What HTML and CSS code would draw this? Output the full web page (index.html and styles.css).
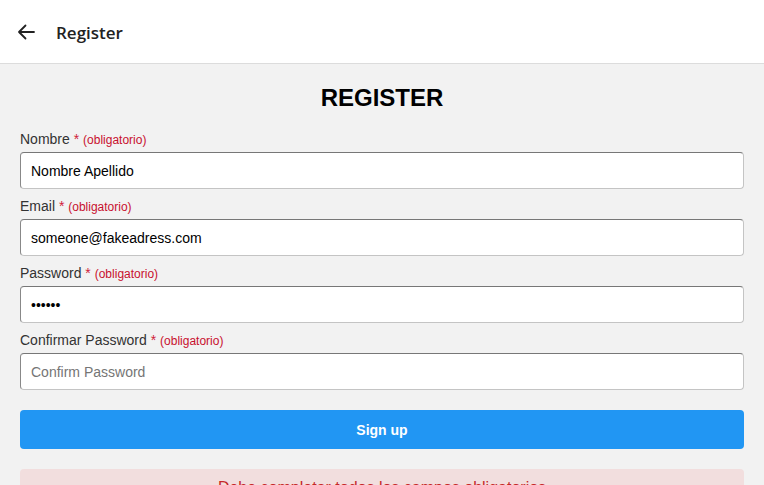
FILE: index.html
```html
<!DOCTYPE html>
<html>
<head>
<meta charset="utf-8">
<link rel="stylesheet" href="styles.css">
</head>
<body>
<header class="topbar">
  <button class="back" aria-label="Back">
    <svg width="20" height="20" viewBox="0 0 20 20"><path d="M18 10H3M9.5 3.5L3 10l6.5 6.5" fill="none" stroke="#222" stroke-width="1.8" stroke-linecap="round" stroke-linejoin="round"/></svg>
  </button>
  <span class="topbar-title">Register</span>
</header>
<main class="content">
  <h1 class="title">REGISTER</h1>
  <form class="form">
    <div class="field">
      <label class="label">Nombre <span class="req">*</span> <span class="req-note">(obligatorio)</span></label>
      <input class="input" type="text" value="Nombre Apellido">
    </div>
    <div class="field">
      <label class="label">Email <span class="req">*</span> <span class="req-note">(obligatorio)</span></label>
      <input class="input" type="text" value="someone@fakeadress.com">
    </div>
    <div class="field">
      <label class="label">Password <span class="req">*</span> <span class="req-note">(obligatorio)</span></label>
      <input class="input" type="password" value="123456">
    </div>
    <div class="field">
      <label class="label">Confirmar Password <span class="req">*</span> <span class="req-note">(obligatorio)</span></label>
      <input class="input" type="password" placeholder="Confirm Password">
    </div>
    <button class="submit" type="button">Sign up</button>
    <div class="alert">Debe completar todos los campos obligatorios</div>
  </form>
</main>
</body>
</html>
```
FILE: styles.css
```css
* { box-sizing: border-box; }
html, body { margin: 0; padding: 0; }
body {
  background: #f2f2f2;
  font-family: "Liberation Sans", Arial, sans-serif;
  color: #333;
  height: 485px;
  overflow: hidden;
}
.topbar {
  height: 64px;
  background: #fff;
  border-bottom: 1px solid #dcdcdc;
  display: flex;
  align-items: center;
  padding-left: 16px;
}
.back {
  border: 0;
  background: none;
  padding: 0;
  width: 20px;
  height: 20px;
  display: flex;
  margin-right: 20px;
}
.topbar-title {
  font-family: "Open Sans", "Noto Sans", sans-serif;
  font-size: 17px;
  font-weight: 600;
  color: #222;
  margin-top: 1px;
}
.content { padding: 0 20px; }
.title {
  margin: 18px 0 0;
  height: 32px;
  line-height: 32px;
  text-align: center;
  font-size: 24px;
  font-weight: bold;
  color: #000;
}
.form { display: flex; flex-direction: column; margin-top: 17px; }
.field { display: flex; flex-direction: column; margin-bottom: 9px; }
.label {
  display: block;
  height: 17px;
  font-size: 14px;
  line-height: 17px;
  margin-bottom: 4px;
  color: #333;
  white-space: nowrap;
}
.req { color: #d0203a; }
.req-note { color: #c8102e; font-size: 12px; }
.input {
  height: 37px;
  border: 1px solid #c4c4c4;
  border-top-color: #777;
  border-left-color: #888;
  border-radius: 4px;
  background: #fff;
  padding: 0 10px;
  font-family: "Liberation Sans", Arial, sans-serif;
  font-size: 14px;
  color: #000;
}
.input::placeholder { color: #757575; }
.submit {
  margin-top: 11px;
  height: 39px;
  border: 0;
  border-radius: 4px;
  background: #2196f3;
  color: #fff;
  font-family: "Liberation Sans", Arial, sans-serif;
  font-weight: bold;
  font-size: 14px;
}
.alert {
  margin-top: 20px;
  background: #f2dede;
  border-radius: 4px;
  padding: 9px 10px;
  height: 40px;
  text-align: center;
  color: #c62828;
  font-size: 16px;
  line-height: 20px;
}
```
